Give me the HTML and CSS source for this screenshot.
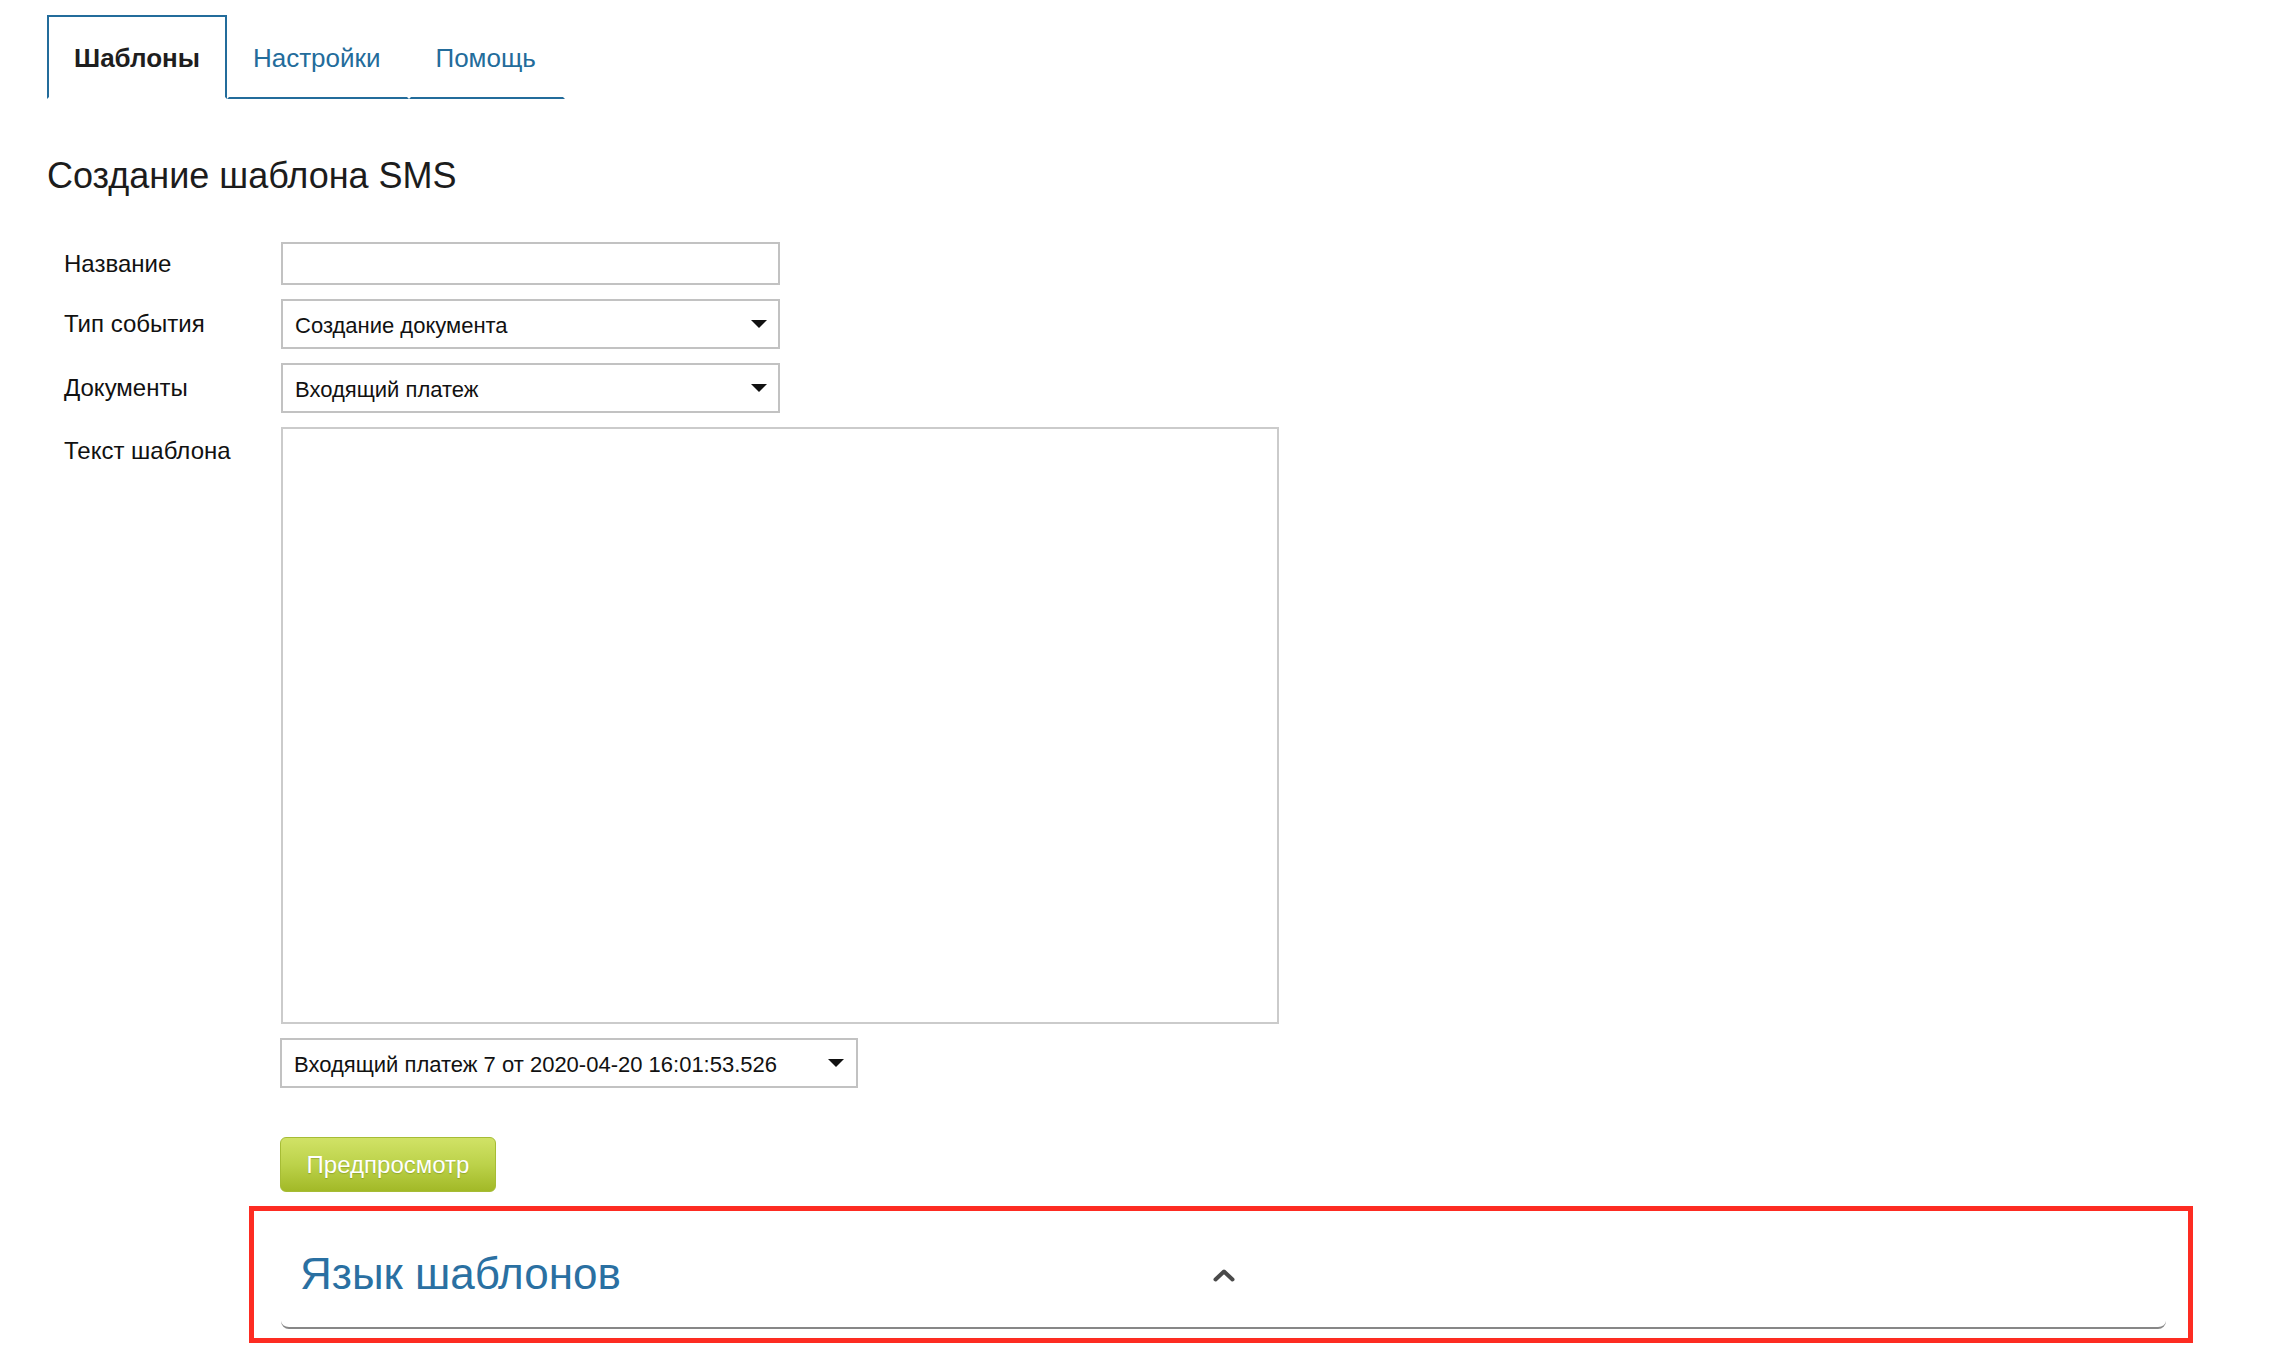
FILE: index.html
```html
<!DOCTYPE html>
<html lang="ru">
<head>
<meta charset="utf-8">
<title>Создание шаблона SMS</title>
<link rel="stylesheet" href="styles.css">
</head>
<body>
<div class="page">
  <ul class="tabs">
    <li class="tab tab-active">Шаблоны</li>
    <li class="tab">Настройки</li>
    <li class="tab">Помощь</li>
  </ul>

  <h1 class="title">Создание шаблона SMS</h1>

  <div class="form">
    <label class="label">Название</label>
    <input class="field field-input" type="text">

    <label class="label">Тип события</label>
    <div class="field select">
      <span>Создание документа</span>
      <svg class="caret" viewBox="0 0 16 8" width="16" height="8"><path d="M0 0H16L8 8Z"/></svg>
    </div>

    <label class="label">Документы</label>
    <div class="field select">
      <span>Входящий платеж</span>
      <svg class="caret" viewBox="0 0 16 8" width="16" height="8"><path d="M0 0H16L8 8Z"/></svg>
    </div>

    <label class="label label-top">Текст шаблона</label>
    <textarea class="textarea"></textarea>

    <div class="select select-doc">
      <span>Входящий платеж 7 от 2020-04-20 16:01:53.526</span>
      <svg class="caret" viewBox="0 0 16 8" width="16" height="8"><path d="M0 0H16L8 8Z"/></svg>
    </div>

    <div class="actions">
      <button class="btn" type="button">Предпросмотр</button>
    </div>
  </div>

  <div class="highlight">
    <div class="panel">
      <div class="panel-head">
        <h2 class="panel-title">Язык шаблонов</h2>
        <svg class="chevron" viewBox="0 0 24 16" width="24" height="16"><path d="M3.5 12.5L12 4.5L20.5 12.5"/></svg>
        <span></span>
      </div>
    </div>
  </div>
</div>
</body>
</html>
```

FILE: styles.css
```css
html, body {
  margin: 0;
  padding: 0;
  background: #ffffff;
}

body {
  font-family: "Liberation Sans", Arial, sans-serif;
  color: #161616;
}

.page {
  padding: 15px 0 0 47px;
}

/* Tabs */
.tabs {
  list-style: none;
  margin: 0;
  padding: 0;
  display: flex;
}

.tab {
  padding: 3px 27px 0 24px;
  line-height: 77px;
  font-size: 26px;
  color: #236c9b;
  border: 2px solid transparent;
  border-bottom-color: #236c9b;
}

.tab-active {
  padding: 3px 25px 0;
  font-weight: bold;
  color: #1e1e1e;
  border-color: #236c9b;
  border-bottom-color: transparent;
}

/* Title */
.title {
  margin: 55px 0 44px;
  font-size: 36px;
  line-height: 44px;
  font-weight: normal;
  color: #1c1c1c;
}

/* Form */
.form {
  margin-left: 17px;
  display: grid;
  grid-template-columns: 217px auto;
  row-gap: 14px;
  align-items: center;
  justify-items: start;
}

.label {
  font-size: 24px;
  color: #111;
}

.label-top {
  align-self: start;
  line-height: 47px;
}

.field {
  box-sizing: border-box;
  width: 499px;
  border: 2px solid #c2c2c2;
  background: #fff;
  margin: 0;
}

.field-input {
  height: 43px;
  padding: 0 12px;
  font: inherit;
  font-size: 22px;
  outline: none;
}

.select {
  box-sizing: border-box;
  height: 50px;
  display: flex;
  align-items: center;
  justify-content: space-between;
  padding: 4px 11px 0 12px;
  font-size: 22px;
  color: #111;
  border: 2px solid #c2c2c2;
}

.caret {
  display: block;
  fill: #111;
  margin-top: -4px;
}

.textarea {
  box-sizing: border-box;
  width: 998px;
  height: 597px;
  border: 2px solid #cbcbcb;
  margin: 0;
  padding: 10px 12px;
  resize: none;
  font: inherit;
  outline: none;
}

.select-doc {
  grid-column: 2;
  width: 578px;
  margin-left: -1px;
  padding-right: 12px;
}

.actions {
  grid-column: 2;
  margin-top: 35px;
}

.btn {
  box-sizing: border-box;
  width: 216px;
  height: 55px;
  margin-left: -1px;
  border: 1px solid #a6bc35;
  border-radius: 6px;
  background: linear-gradient(to bottom, #d1e266 0%, #bcd24a 50%, #a2b927 100%);
  color: #ffffff;
  font-family: inherit;
  font-size: 24px;
  text-shadow: 0 1px 1px rgba(90, 110, 10, 0.35);
  padding: 0;
}

/* Highlighted panel */
.highlight {
  box-sizing: border-box;
  width: 1944px;
  margin: 14px 0 0 202px;
  border: 5px solid #fd2c22;
  padding: 33px 22px 9px 27px;
}

.panel {
  border-bottom: 2px solid #878787;
  border-radius: 0 0 8px 8px;
  padding-bottom: 23px;
}

.panel-head {
  display: grid;
  grid-template-columns: 1fr auto 1fr;
  align-items: center;
}

.panel-title {
  margin: 0;
  padding-left: 19px;
  font-size: 44px;
  line-height: 60px;
  font-weight: normal;
  color: #2a70a2;
}

.chevron {
  display: block;
  fill: none;
  stroke: #4a4a4a;
  stroke-width: 4;
  stroke-linecap: round;
  stroke-linejoin: round;
  margin-top: 2px;
}
```
